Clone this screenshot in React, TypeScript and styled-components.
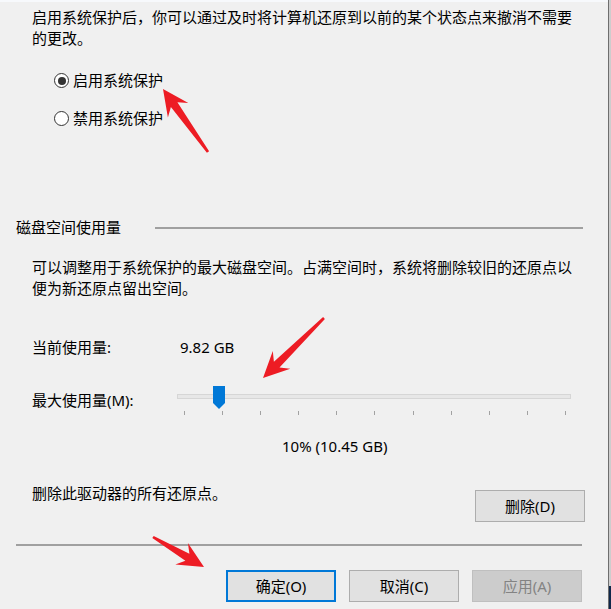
import React from "react";
import styled, { createGlobalStyle } from "styled-components";

const GlobalStyle = createGlobalStyle`
  html, body { margin: 0; padding: 0; background: #f0f0f0; }
  #root { width: 611px; height: 609px; overflow: hidden; }
`;

const Screen = styled.div`
  position: relative;
  width: 611px;
  height: 609px;
  display: flex;
  flex-direction: row;
  overflow: hidden;
`;

const Dialog = styled.div`
  width: 608px;
  height: 609px;
  box-sizing: border-box;
  border-top: 2px solid #f7f9fc;
  padding: 5px 26px 0 16px;
  display: flex;
  flex-direction: column;
  background: #f0f0f0;
  font-family: "Noto Sans", "Noto Sans CJK SC", sans-serif;
  font-size: 15px;
  line-height: 21px;
  color: #000;
`;

const EdgeStrip = styled.div`
  width: 3px;
  box-sizing: border-box;
  border-left: 1px solid #6e6e6e;
  background: #cdcdcd;
  display: flex;
  flex-direction: column;
`;

const EdgeCap = styled.div`
  margin-top: auto;
  height: 23px;
  background: #10284a;
`;

const Para = styled.p<{ $top?: number }>`
  margin: ${(p) => p.$top ?? 0}px 0 0 16px;
`;

const RadioRow = styled.label<{ $top: number }>`
  display: flex;
  align-items: center;
  height: 21px;
  margin: ${(p) => p.$top}px 0 0 38px;
  gap: 4px;
`;

const RadioCircle = styled.span<{ $checked?: boolean }>`
  width: 15px;
  height: 15px;
  box-sizing: border-box;
  border-radius: 50%;
  border: 1px solid #333;
  background: #fff;
  display: flex;
  align-items: center;
  justify-content: center;
  &::after {
    content: "";
    width: 8px;
    height: 8px;
    border-radius: 50%;
    background: ${(p) => (p.$checked ? "#333" : "transparent")};
  }
`;

const SectionHeader = styled.div`
  display: flex;
  align-items: center;
  height: 21px;
  margin-top: 88px;
  margin-right: -1px;
`;

const Rule = styled.div`
  flex: 1;
  height: 2px;
  margin-left: 34px;
  background: #a0a0a0;
`;

const InfoRow = styled.div<{ $top: number }>`
  display: flex;
  align-items: center;
  margin: ${(p) => p.$top}px 0 0 16px;
`;

const Label = styled.span<{ $width: number }>`
  width: ${(p) => p.$width}px;
  flex: none;
`;

const Slider = styled.div`
  position: relative;
  width: 394px;
  height: 29px;
`;

const Track = styled.div`
  position: absolute;
  left: 0;
  right: 0;
  top: 8px;
  height: 5px;
  box-sizing: border-box;
  border: 1px solid #d6d6d6;
  background: #e7e7e7;
`;

const Thumb = styled.div`
  position: absolute;
  top: 0;
  width: 12px;
  height: 23px;
  background: #0078d7;
  clip-path: polygon(0 0, 100% 0, 100% 74%, 50% 100%, 0 74%);
`;

const Ticks = styled.div`
  position: absolute;
  left: 7px;
  right: 5px;
  top: 25px;
  height: 4px;
  display: flex;
  justify-content: space-between;
`;

const Tick = styled.span`
  width: 1px;
  height: 4px;
  background: #a2a2a2;
`;

const Percent = styled.div`
  margin: 21px 0 0 266px;
`;

const DeleteRow = styled.div`
  display: flex;
  align-items: flex-start;
  margin: 26px -3px 0 16px;
`;

const Button = styled.button<{ $variant?: "default" | "primary" | "disabled"; $top?: number }>`
  width: 110px;
  height: 32px;
  box-sizing: border-box;
  margin-top: ${(p) => p.$top ?? 0}px;
  font: inherit;
  padding: 0;
  border: ${(p) => (p.$variant === "primary" ? "2px solid #0078d7" : p.$variant === "disabled" ? "1px solid #bfbfbf" : "1px solid #adadad")};
  background: ${(p) => (p.$variant === "disabled" ? "#cccccc" : "#e1e1e1")};
  color: ${(p) => (p.$variant === "disabled" ? "#838383" : "#000")};
  display: flex;
  align-items: center;
  justify-content: center;
`;

const PushRight = styled.div`
  margin-left: auto;
`;

const Separator = styled.div`
  height: 2px;
  margin-top: 22px;
  background: #a0a0a0;
`;

const ButtonBar = styled.div`
  display: flex;
  justify-content: flex-end;
  gap: 13px;
  margin-top: 24px;
`;

const Overlay = styled.svg`
  position: absolute;
  left: 0;
  top: 0;
  pointer-events: none;
`;

function arrowPoints(tx: number, ty: number, px: number, py: number, h = 26, w = 12.5, sw = 4, tw = 1.3) {
  const dx = px - tx;
  const dy = py - ty;
  const len = Math.hypot(dx, dy);
  const ux = dx / len;
  const uy = dy / len;
  const nx = -uy;
  const ny = ux;
  const bx = px - ux * h;
  const by = py - uy * h;
  const kx = px - ux * h * 0.74;
  const ky = py - uy * h * 0.74;
  const pts = [
    [px, py],
    [bx + nx * w, by + ny * w],
    [kx + nx * sw, ky + ny * sw],
    [tx + nx * tw, ty + ny * tw],
    [tx - nx * tw, ty - ny * tw],
    [kx - nx * sw, ky - ny * sw],
    [bx - nx * w, by - ny * w],
  ];
  return pts.map((p) => `${p[0].toFixed(1)},${p[1].toFixed(1)}`).join(" ");
}

const arrows = [
  { t: [208, 152], p: [163, 89] },
  { t: [324, 318], p: [263, 378] },
  { t: [153, 537], p: [204, 567] },
];

export default function App() {
  return (
    <>
      <GlobalStyle />
      <Screen>
        <Dialog>
          <Para>启用系统保护后，你可以通过及时将计算机还原到以前的某个状态点来撤消不需要的更改。</Para>
          <RadioRow $top={21}>
            <RadioCircle $checked />
            <span>启用系统保护</span>
          </RadioRow>
          <RadioRow $top={17}>
            <RadioCircle />
            <span>禁用系统保护</span>
          </RadioRow>
          <SectionHeader>
            <span>磁盘空间使用量</span>
            <Rule />
          </SectionHeader>
          <Para $top={19}>可以调整用于系统保护的最大磁盘空间。占满空间时，系统将删除较旧的还原点以便为新还原点留出空间。</Para>
          <InfoRow $top={38}>
            <Label $width={148}>当前使用量:</Label>
            <span>9.82 GB</span>
          </InfoRow>
          <InfoRow $top={28}>
            <Label $width={145}>最大使用量(M):</Label>
            <Slider>
              <Track />
              <Thumb style={{ left: 36 }} />
              <Ticks>
                {Array.from({ length: 11 }).map((_, i) => (
                  <Tick key={i} />
                ))}
              </Ticks>
            </Slider>
          </InfoRow>
          <Percent>10% (10.45 GB)</Percent>
          <DeleteRow>
            <span>删除此驱动器的所有还原点。</span>
            <PushRight>
              <Button $top={7}>删除(D)</Button>
            </PushRight>
          </DeleteRow>
          <Separator />
          <ButtonBar>
            <Button $variant="primary">确定(O)</Button>
            <Button>取消(C)</Button>
            <Button $variant="disabled">应用(A)</Button>
          </ButtonBar>
        </Dialog>
        <EdgeStrip>
          <EdgeCap />
        </EdgeStrip>
        <Overlay width={611} height={609} viewBox="0 0 611 609">
          {arrows.map((a, i) => (
            <polygon key={i} points={arrowPoints(a.t[0], a.t[1], a.p[0], a.p[1])} fill="#ed1c24" />
          ))}
        </Overlay>
      </Screen>
    </>
  );
}
